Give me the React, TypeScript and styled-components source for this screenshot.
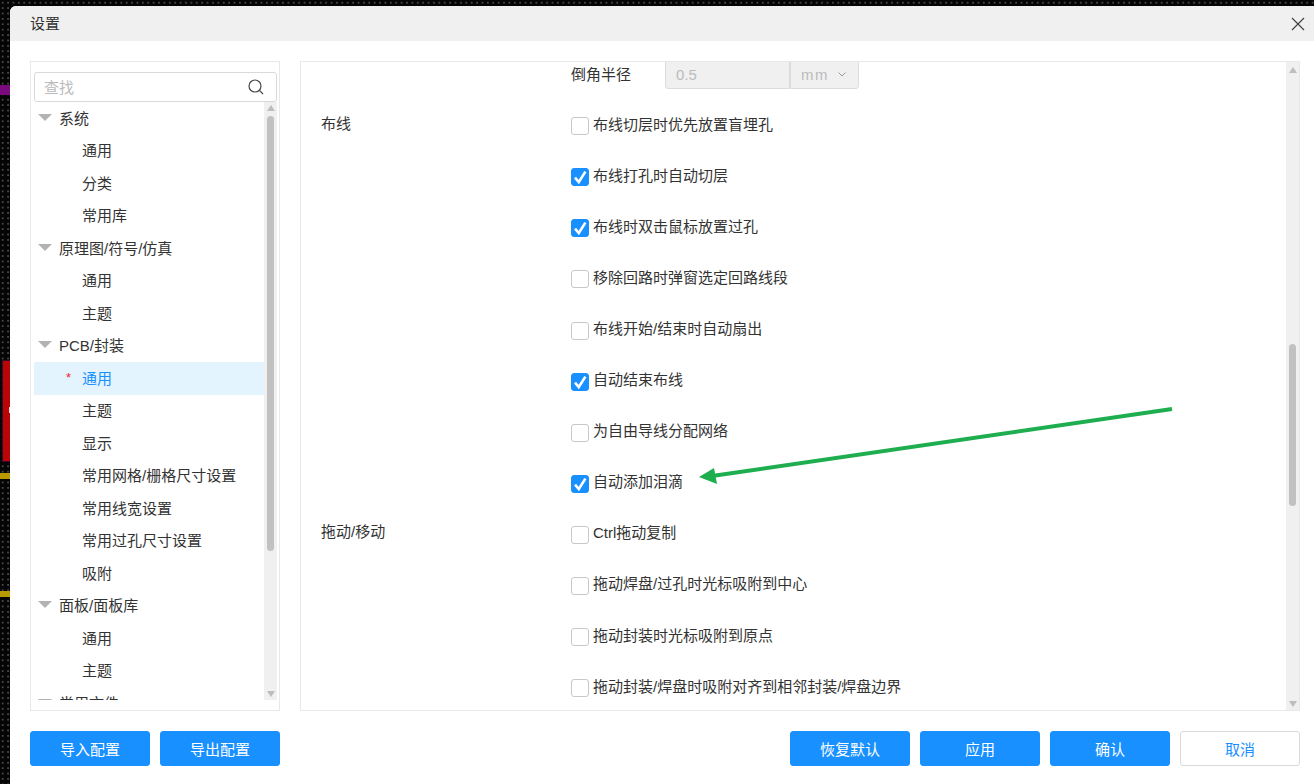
import styled, { createGlobalStyle } from 'styled-components';

const GlobalStyle = createGlobalStyle`
  html, body {
    margin: 0;
    padding: 0;
    overflow: hidden;
    background: #000;
    font-family: "Liberation Sans", "Noto Sans CJK SC", sans-serif;
  }
  * {
    box-sizing: border-box;
  }
`;

const Page = styled.div`
  width: 1314px;
  height: 784px;
  position: relative;
  overflow: hidden;
  padding: 6px 0 0 10px;
  background-color: #050505;
  background-image: radial-gradient(#555 0.6px, transparent 0.8px);
  background-size: 5.4px 5.4px;
`;

// pieces of the canvas peeking out behind the dialog
const CanvasStrip = styled.div<{ $top: number; $height: number; $color: string; $left?: number; $edge?: string }>`
  position: absolute;
  left: ${(p) => p.$left ?? 0}px;
  right: 1304px;
  top: ${(p) => p.$top}px;
  height: ${(p) => p.$height}px;
  background: ${(p) => p.$color};
  ${(p) => (p.$edge ? `border: 1px solid ${p.$edge}; border-right: none;` : '')}
`;

const Dialog = styled.div`
  position: relative;
  width: 1304px;
  height: 778px;
  display: flex;
  flex-direction: column;
  background: #fff;
  border-top-left-radius: 6px;
  overflow: hidden;
  font-size: 15px;
  color: #333;
`;

const Header = styled.div`
  height: 35px;
  flex: none;
  padding: 1px 9px 0 20px;
  display: flex;
  align-items: center;
  justify-content: space-between;
  background: #f0f0f0;
`;

const Title = styled.span`
  padding-bottom: 4px;
  font-size: 15px;
  color: #333;
`;

const Body = styled.div`
  height: 650px;
  flex: none;
  margin-top: 20px;
  padding: 0 14px 0 20px;
  display: flex;
  gap: 20px;
`;

const LeftPanel = styled.div`
  width: 250px;
  display: flex;
  flex-direction: column;
  padding: 10px 2px 10px 3px;
  border: 1px solid #e8e8e8;
`;

const SearchBox = styled.div`
  height: 30px;
  flex: none;
  padding: 0 12px 0 9px;
  display: flex;
  align-items: center;
  justify-content: space-between;
  border: 1px solid #d9d9d9;
  border-radius: 3px;
  color: #bbb;
`;

const Placeholder = styled.span`
  padding-bottom: 2px;
`;

const TreeArea = styled.div`
  flex: 1;
  min-height: 0;
  display: flex;
`;

const Tree = styled.div`
  flex: 1;
  min-width: 0;
  overflow: hidden;
`;

const TreeRow = styled.div<{ $active?: boolean }>`
  height: 32.5px;
  padding-bottom: 2px;
  display: flex;
  align-items: center;
  background: ${(p) => (p.$active ? '#e3f4fe' : 'transparent')};
  color: ${(p) => (p.$active ? '#1890ff' : '#333')};
  white-space: nowrap;
`;

const Caret = styled.span`
  width: 0;
  height: 0;
  margin: 0 7px 0 4px;
  border-left: 7.5px solid transparent;
  border-right: 7.5px solid transparent;
  border-top: 7px solid #b3b3b3;
`;

const Gutter = styled.span`
  width: 48px;
  flex: none;
  padding-right: 11px;
  text-align: right;
  font-size: 13px;
  color: #f5222d;
`;

const ScrollTrack = styled.div<{ $width: number }>`
  width: ${(p) => p.$width}px;
  flex: none;
  display: flex;
  flex-direction: column;
  align-items: center;
  background: #f0f0f0;
`;

const ArrowUp = styled.span<{ $top: number }>`
  width: 0;
  height: 0;
  flex: none;
  margin-top: ${(p) => p.$top}px;
  border-left: 4.5px solid transparent;
  border-right: 4.5px solid transparent;
  border-bottom: 6px solid #bdbdbd;
`;

const ArrowDown = styled.span`
  width: 0;
  height: 0;
  flex: none;
  margin-top: auto;
  margin-bottom: 3px;
  border-left: 4.5px solid transparent;
  border-right: 4.5px solid transparent;
  border-top: 6px solid #bdbdbd;
`;

const Thumb = styled.div<{ $top: number; $height: number }>`
  width: 7px;
  height: ${(p) => p.$height}px;
  flex: none;
  margin-top: ${(p) => p.$top}px;
  background: #c1c1c1;
  border-radius: 4px;
`;

const RightPanel = styled.div`
  width: 1000px;
  display: flex;
  border: 1px solid #e8e8e8;
  overflow: hidden;
`;

const Content = styled.div`
  flex: 1;
  min-width: 0;
  padding-left: 20px;
  overflow: hidden;
`;

// stands in for the scroll offset of the settings list
const ScrollInner = styled.div`
  margin-top: -13.5px;
`;

const Section = styled.div`
  display: grid;
  grid-template-columns: 250px 1fr;
`;

const SectionList = styled.div`
  margin-top: 1px;
`;

const SectionLabel = styled.div`
  height: 51.1px;
  display: flex;
  align-items: center;
  padding-bottom: 8px;
`;

const Rows = styled.div`
  display: flex;
  flex-direction: column;
`;

const Row = styled.div`
  height: 51.1px;
  display: flex;
  align-items: center;
  gap: 4px;
  white-space: nowrap;
`;

const OptionText = styled.span`
  padding-bottom: 6px;
`;

const FieldLabel = styled.span`
  width: 90px;
  padding-bottom: 2px;
`;

const NumberInput = styled.div`
  width: 125px;
  height: 30px;
  padding-left: 10px;
  display: flex;
  align-items: center;
  background: #f0f0f0;
  border: 1px solid #dcdcdc;
  border-radius: 3px 0 0 3px;
  color: #bbb;
`;

const UnitSelect = styled.div`
  width: 69px;
  height: 30px;
  margin-left: -4px;
  padding: 0 12px 0 10px;
  display: flex;
  align-items: center;
  justify-content: space-between;
  background: #f0f0f0;
  border: 1px solid #dcdcdc;
  border-radius: 0 3px 3px 0;
  color: #bbb;
  letter-spacing: 1.5px;
`;

const CheckBox = styled.span<{ $checked?: boolean }>`
  width: 18px;
  height: 18px;
  flex: none;
  display: flex;
  align-items: center;
  justify-content: center;
  border: 1px solid ${(p) => (p.$checked ? '#1890ff' : '#c8c8c8')};
  border-radius: 3px;
  background: ${(p) => (p.$checked ? '#1890ff' : '#fff')};
`;

const Footer = styled.div`
  flex: none;
  margin-top: 20px;
  padding: 0 14px 0 20px;
  display: flex;
  gap: 10px;
`;

const Spacer = styled.div`
  flex: 1;
`;

const Button = styled.div<{ $ghost?: boolean }>`
  width: 120px;
  height: 35px;
  display: flex;
  align-items: center;
  justify-content: center;
  border: 1px solid ${(p) => (p.$ghost ? '#d9d9d9' : '#1890ff')};
  border-radius: 3px;
  background: ${(p) => (p.$ghost ? '#fff' : '#1890ff')};
  color: ${(p) => (p.$ghost ? '#1890ff' : '#fff')};
`;

const Annotation = styled.svg`
  position: absolute;
  left: 0;
  top: 0;
  pointer-events: none;
`;

const treeItems: { text: string; group?: boolean; active?: boolean }[] = [
  { text: '系统', group: true },
  { text: '通用' },
  { text: '分类' },
  { text: '常用库' },
  { text: '原理图/符号/仿真', group: true },
  { text: '通用' },
  { text: '主题' },
  { text: 'PCB/封装', group: true },
  { text: '通用', active: true },
  { text: '主题' },
  { text: '显示' },
  { text: '常用网格/栅格尺寸设置' },
  { text: '常用线宽设置' },
  { text: '常用过孔尺寸设置' },
  { text: '吸附' },
  { text: '面板/面板库', group: true },
  { text: '通用' },
  { text: '主题' },
  { text: '常用文件', group: true },
];

const routing = [
  { text: '布线切层时优先放置盲埋孔', checked: false },
  { text: '布线打孔时自动切层', checked: true },
  { text: '布线时双击鼠标放置过孔', checked: true },
  { text: '移除回路时弹窗选定回路线段', checked: false },
  { text: '布线开始/结束时自动扇出', checked: false },
  { text: '自动结束布线', checked: true },
  { text: '为自由导线分配网络', checked: false },
  { text: '自动添加泪滴', checked: true },
];

const dragging = [
  { text: 'Ctrl拖动复制', checked: false },
  { text: '拖动焊盘/过孔时光标吸附到中心', checked: false },
  { text: '拖动封装时光标吸附到原点', checked: false },
  { text: '拖动封装/焊盘时吸附对齐到相邻封装/焊盘边界', checked: false },
];

function Option({ text, checked }: { text: string; checked: boolean }) {
  return (
    <Row>
      <CheckBox $checked={checked}>
        {checked && (
          <svg width="16" height="16" viewBox="0 0 16 16">
            <path d="M3 8.6 L6.8 13 L13.4 2.6" fill="none" stroke="#fff" strokeWidth="2.6" />
          </svg>
        )}
      </CheckBox>
      <OptionText>{text}</OptionText>
    </Row>
  );
}

export default function App() {
  return (
    <Page>
      <GlobalStyle />
      <CanvasStrip $top={85} $height={10} $color="#7b0a7e" />
      <CanvasStrip $top={360} $height={102} $color="#b90505" $left={2} $edge="#3a0a2a" />
      <CanvasStrip $top={407} $height={6} $color="#ddd" $left={9} />
      <CanvasStrip $top={473} $height={6} $color="#b89a00" />
      <CanvasStrip $top={591} $height={6} $color="#b89a00" />
      <Dialog>
        <Header>
          <Title>设置</Title>
          <svg width="14" height="14" viewBox="0 0 14 14">
            <path d="M1 1 L13 13 M13 1 L1 13" stroke="#444" strokeWidth="1.2" fill="none" />
          </svg>
        </Header>
        <Body>
          <LeftPanel>
            <SearchBox>
              <Placeholder>查找</Placeholder>
              <svg width="16" height="16" viewBox="0 0 16 16">
                <circle cx="7" cy="7" r="6" fill="none" stroke="#444" strokeWidth="1.2" />
                <path d="M11.4 11.4 L15 15" stroke="#444" strokeWidth="1.2" />
              </svg>
            </SearchBox>
            <TreeArea>
              <Tree>
                {treeItems.map((item, i) => (
                  <TreeRow key={i} $active={item.active}>
                    {item.group ? <Caret /> : <Gutter>{item.active ? '*' : ''}</Gutter>}
                    {item.text}
                  </TreeRow>
                ))}
              </Tree>
              <ScrollTrack $width={13}>
                <ArrowUp $top={3} />
                <Thumb $top={5} $height={435} />
                <ArrowDown />
              </ScrollTrack>
            </TreeArea>
          </LeftPanel>
          <RightPanel>
            <Content>
              <ScrollInner>
                <Section>
                  <SectionLabel />
                  <Rows>
                    <Row>
                      <FieldLabel>倒角半径</FieldLabel>
                      <NumberInput>0.5</NumberInput>
                      <UnitSelect>
                        mm
                        <svg width="8" height="5" viewBox="0 0 8 5">
                          <path d="M0.5 0.5 L4 4 L7.5 0.5" fill="none" stroke="#999" strokeWidth="1" />
                        </svg>
                      </UnitSelect>
                    </Row>
                  </Rows>
                </Section>
                <SectionList>
                  <Section>
                    <SectionLabel>布线</SectionLabel>
                    <Rows>
                      {routing.map((o) => (
                        <Option key={o.text} text={o.text} checked={o.checked} />
                      ))}
                    </Rows>
                  </Section>
                  <Section>
                    <SectionLabel>拖动/移动</SectionLabel>
                    <Rows>
                      {dragging.map((o) => (
                        <Option key={o.text} text={o.text} checked={o.checked} />
                      ))}
                    </Rows>
                  </Section>
                </SectionList>
              </ScrollInner>
            </Content>
            <ScrollTrack $width={13}>
              <ArrowUp $top={5} />
              <Thumb $top={271} $height={162} />
              <ArrowDown />
            </ScrollTrack>
          </RightPanel>
        </Body>
        <Footer>
          <Button>导入配置</Button>
          <Button>导出配置</Button>
          <Spacer />
          <Button>恢复默认</Button>
          <Button>应用</Button>
          <Button>确认</Button>
          <Button $ghost>取消</Button>
        </Footer>
      </Dialog>
      <Annotation width="1314" height="784" viewBox="0 0 1314 784">
        <path d="M1172 409 L712 476" stroke="#1fae4f" strokeWidth="4" fill="none" />
        <path d="M699 477 L714 468 L717 484 Z" fill="#1fae4f" />
      </Annotation>
    </Page>
  );
}
